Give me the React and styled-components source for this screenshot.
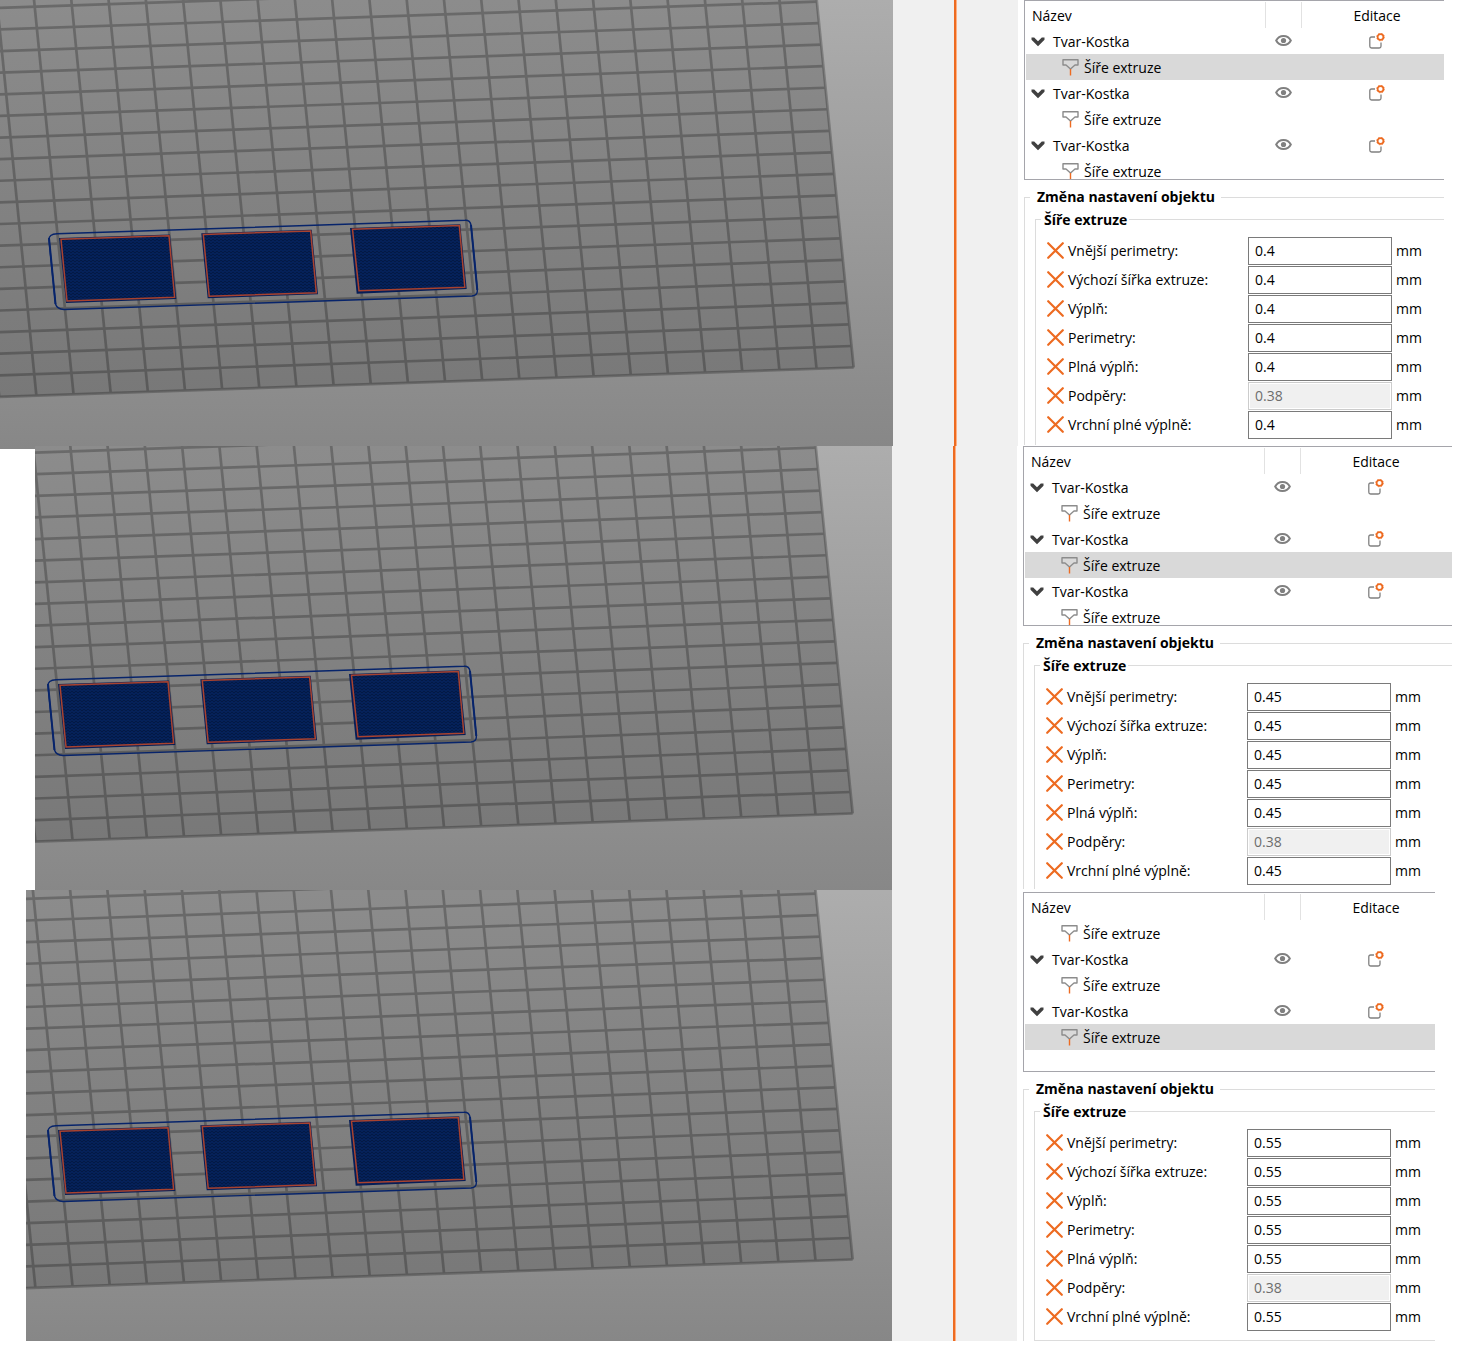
import React, { useState } from 'react'
import styled, { createGlobalStyle } from 'styled-components'

const GlobalStyle = createGlobalStyle`
  * {
    box-sizing: border-box;
  }

  body {
    margin: 0;
    background: #fff;
    color: #000;
    font-family: 'Open Sans', 'Noto Sans', sans-serif;
    font-size: 14px;
    line-height: 20px;
  }
`

const Section = styled.section`
  display: grid;
  grid-template-columns: minmax(0, 1fr) 125px ${(props) => props.$side}px;
`

const Viewport = styled.div`
  padding-left: ${(props) => props.$indent}px;
  margin-bottom: ${(props) => (props.$overlap ? '-3px' : '0')};

  svg {
    display: block;
    width: 100%;
    height: auto;
  }
`

const Splitter = styled.div`
  display: flex;
  justify-content: center;
  background: #f0f0f0;
  z-index: 1;

  &::before {
    content: '';
    width: 3px;
    background: linear-gradient(to right, #ed6b21 2px, #ffb083 2px);
  }
`

const Sidebar = styled.aside`
  min-width: 0;
  padding: ${(props) => props.$top}px ${(props) => props.$right}px 0 6px;
  background: #fff;
`

const ListBox = styled.div`
  height: 180px;
  overflow: hidden;
  border: solid #a5a5ab;
  border-width: 1px 0 1px 1px;
  padding: 1px 0 0 1px;
`

const Table = styled.table`
  width: 100%;
  min-width: 427px;
  table-layout: fixed;
  border-collapse: collapse;
`

const HeadCell = styled.th`
  width: ${(props) => props.$width || 'auto'};
  height: 26px;
  padding: 2px 0 0 ${(props) => (props.$first ? '6px' : '0')};
  font-weight: 400;
  text-align: ${(props) => (props.$first ? 'left' : 'center')};
  box-shadow: ${(props) => (props.$first ? 'none' : 'inset 1px 0 #e2e2e2')};
`

const Row = styled.tr`
  height: 26px;
  background: ${(props) => (props.$selected ? '#d9d9d9' : 'transparent')};
`

const Cell = styled.td`
  height: 26px;
  padding: 0;
`

const NameWrapper = styled.div`
  display: flex;
  align-items: center;
  gap: ${(props) => (props.$child ? '5px' : '8px')};
  padding-top: 2px;
  padding-left: ${(props) => (props.$child ? '36px' : '5px')};
`

const IconButton = styled.button`
  display: flex;
  justify-content: center;
  margin: 0 auto;
  padding: 0;
  border: none;
  background: none;
  cursor: pointer;

  ${NameWrapper} & {
    margin: 0;
  }
`

const Group = styled.fieldset`
  min-width: 0;
  margin: 6px 0 0;
  padding: 0 0 0 10px;
  border: solid #dcdcdc;
  border-width: 1px 0 0 1px;
`

const SubGroup = styled.fieldset`
  min-width: 0;
  margin: 0;
  padding: 6px 0 ${(props) => props.$tail}px 11px;
  border: solid #dcdcdc;
  border-width: 1px 0 ${(props) => (props.$closed ? '1px' : '0')} 1px;
`

const Legend = styled.legend`
  margin-left: -5px;
  padding: 0 6px 0 7px;
  font-weight: 700;
  line-height: 22px;
`

const SubLegend = styled.legend`
  margin-left: -6px;
  padding: 2px 2px 0 3px;
  font-weight: 700;
  line-height: 20px;
`

const Field = styled.div`
  display: grid;
  grid-template-columns: 17px 184px 144px auto;
  align-items: center;
  height: 29px;
`

const Label = styled.label`
  padding-left: 4px;
`

const Input = styled.input`
  width: 144px;
  height: 28px;
  margin: 0;
  padding: 0 6px;
  border: 1px solid #7a7a7a;
  border-radius: 0;
  background: #fff;
  color: #000;
  font: inherit;

  &:disabled {
    border-color: #ccc;
    background: #f0f0f0;
    box-shadow: inset 0 0 0 1px #fff;
    color: #6d6d6d;
  }
`

const Unit = styled.span`
  padding-left: 4px;
`

const ChevronIcon = () => (
  <svg width="14" height="10" viewBox="0 0 14 10">
    <path
      d="M0.5 0.6 H3.2 L7 4.2 L10.8 0.6 H13.5 V2.8 L7 9.2 L0.5 2.8 Z"
      fill="#404040"
    />
  </svg>
)

const NozzleIcon = () => (
  <svg width="17" height="18" viewBox="0 1 17 18">
    <path
      d="M1 1.7 H16 V7 H13 L8.5 11 L4 7 H1 Z"
      fill="none"
      stroke="#8c8c8c"
      strokeWidth="1.4"
      strokeLinejoin="round"
    />
    <path d="M8.5 11 V17.5" stroke="#ed6b21" strokeWidth="1.4" />
  </svg>
)

const EyeIcon = () => (
  <svg width="17" height="14" viewBox="0 0 17 14">
    <path
      d="M1.2 6.5 C4.2 0.4 12.8 0.4 15.8 6.5 C12.8 12.6 4.2 12.6 1.2 6.5 Z"
      fill="none"
      stroke="#808080"
      strokeWidth="2"
    />
    <circle cx="8.5" cy="6.5" r="2.6" fill="#808080" />
  </svg>
)

const EditIcon = () => (
  <svg width="16" height="16" viewBox="0 0 16 16">
    <path
      d="M6 4 H2.6 Q0.8 4 0.8 5.8 V13.2 Q0.8 15 2.6 15 H10.2 Q12 15 12 13.2 V9.5"
      fill="none"
      stroke="#808080"
      strokeWidth="1.3"
    />
    <circle cx="11.5" cy="4" r="2.9" fill="none" stroke="#ed6b21" strokeWidth="1.7" />
    <circle
      cx="11.5"
      cy="4"
      r="3.8"
      fill="none"
      stroke="#ed6b21"
      strokeWidth="0.8"
      strokeDasharray="1.5 1.5"
    />
  </svg>
)

const CrossIcon = () => (
  <svg width="17" height="17" viewBox="0 0 17 17">
    <path
      d="M1.2 1.2 L15.8 15.8 M15.8 1.2 L1.2 15.8"
      stroke="#ed6b21"
      strokeWidth="2.2"
      strokeLinecap="round"
    />
  </svg>
)

const objects = [
  {
    outer: '59,238 170,234.5 176.3,299 66,303',
    inner: '61,239.3 169,235.8 174.6,297.3 67,301'
  },
  {
    outer: '201.3,233.3 311.7,229.7 318,294.3 207.7,298.3',
    inner: '203.3,234.5 310.6,231 316.3,292.7 209.2,296.3'
  },
  {
    outer: '350,228 460.3,224.3 466.7,289 356.7,293.7',
    inner: '352.5,229.3 459.3,225.6 464.8,287.3 359,290.7'
  }
]

const columns = Array.from({ length: 25 }, (_, k) => ({
  x1: 816.3 - 37.27 * k,
  x2: 853.7 - 37.15 * k,
  y2: 367.5 + 1.284 * k
}))

const rows = Array.from({ length: 20 }, (_, j) => ({
  y1: 397 - 21.62 * j,
  x2: 853.7 - 2.15 * j,
  y2: 367.5 - 21.52 * j
}))

function Bed({ id, viewBox }) {
  return (
    <svg viewBox={viewBox} role="img" aria-label="Náhled tiskové podložky">
      <defs>
        <linearGradient id={`back-${id}`} gradientUnits="userSpaceOnUse" x1="0" y1="0" x2="0" y2="449">
          <stop offset="0" stopColor="#adadad" />
          <stop offset="1" stopColor="#878787" />
        </linearGradient>
        <linearGradient id={`bed-${id}`} gradientUnits="userSpaceOnUse" x1="0" y1="0" x2="0" y2="397">
          <stop offset="0" stopColor="#8c8c8c" />
          <stop offset="1" stopColor="#787878" />
        </linearGradient>
        <pattern id={`fill-${id}`} width="4" height="3" patternUnits="userSpaceOnUse">
          <rect width="4" height="3" fill="#031945" />
          <path d="M0 1 H2 M2 2 H4" stroke="#06286c" strokeWidth="1" />
        </pattern>
      </defs>
      <rect x="0" y="-4" width="900" height="460" fill={`url(#back-${id})`} />
      <polygon points="0,-4 816.3,-4 853.7,367.5 0,397" fill={`url(#bed-${id})`} />
      <g stroke="#000" strokeWidth="2.7" opacity="0.24">
        {columns.map((line, k) => (
          <line key={k} x1={line.x1} y1="-4" x2={line.x2} y2={line.y2} />
        ))}
        {rows.map((line, j) => (
          <line key={j} x1="-1" y1={line.y1} x2={line.x2} y2={line.y2} />
        ))}
      </g>
      <g fill="none" stroke="#07246b">
        <path
          d="M49 240 Q48.5 234 57 233.8 L465 220.3 Q470 220 471 225 L477.3 290 Q477.8 295.6 472 296 L64 309.5 Q57 309 55.5 304 Z"
          strokeWidth="1.4"
        />
        <path d="M49 238 L55.5 304 M471 225 L477.3 290" strokeWidth="2" />
      </g>
      {objects.map((object) => (
        <g key={object.outer}>
          <polygon points={object.outer} fill="#061d57" />
          <polygon points={object.inner} fill={`url(#fill-${id})`} stroke="#a8422f" strokeWidth="1.5" />
        </g>
      ))}
    </svg>
  )
}

function ObjectList({ items, selected, onSelect }) {
  return (
    <ListBox>
      <Table>
        <thead>
          <tr>
            <HeadCell $first $width="239px">
              Název
            </HeadCell>
            <HeadCell $width="36px" aria-label="Viditelnost" />
            <HeadCell>Editace</HeadCell>
          </tr>
        </thead>
        <tbody>
          {items.map((item, index) =>
            item === 'object' ? (
              <Row key={index}>
                <Cell>
                  <NameWrapper>
                    <IconButton aria-label="Sbalit">
                      <ChevronIcon />
                    </IconButton>
                    Tvar-Kostka
                  </NameWrapper>
                </Cell>
                <Cell>
                  <IconButton aria-label="Zobrazit">
                    <EyeIcon />
                  </IconButton>
                </Cell>
                <Cell>
                  <IconButton aria-label="Upravit">
                    <EditIcon />
                  </IconButton>
                </Cell>
              </Row>
            ) : (
              <Row
                key={index}
                $selected={index === selected}
                onClick={() => onSelect(index)}
              >
                <Cell colSpan={3}>
                  <NameWrapper $child>
                    <NozzleIcon />
                    Šíře extruze
                  </NameWrapper>
                </Cell>
              </Row>
            )
          )}
        </tbody>
      </Table>
    </ListBox>
  )
}

const labels = [
  'Vnější perimetry:',
  'Výchozí šířka extruze:',
  'Výplň:',
  'Perimetry:',
  'Plná výplň:',
  'Podpěry:',
  'Vrchní plné výplně:'
]

function Settings({ id, value, tail, closed }) {
  return (
    <Group>
      <Legend>Změna nastavení objektu</Legend>
      <SubGroup $tail={tail} $closed={closed}>
        <SubLegend>Šíře extruze</SubLegend>
        {labels.map((label, index) => {
          const disabled = label === 'Podpěry:'
          const name = `field-${id}-${index}`
          return (
            <Field key={label}>
              <IconButton type="button" aria-label="Odebrat">
                <CrossIcon />
              </IconButton>
              <Label htmlFor={name}>{label}</Label>
              <Input
                id={name}
                type="text"
                defaultValue={disabled ? '0.38' : value}
                disabled={disabled}
              />
              <Unit>mm</Unit>
            </Field>
          )
        })}
      </SubGroup>
    </Group>
  )
}

const sections = [
  {
    id: 'a',
    value: '0.4',
    items: ['object', 'width', 'object', 'width', 'object', 'width'],
    selected: 1,
    viewBox: '0 0 893 449',
    indent: 0,
    overlap: true,
    side: 440,
    right: 14,
    top: 0,
    tail: 6
  },
  {
    id: 'b',
    value: '0.45',
    items: ['object', 'width', 'object', 'width', 'object', 'width'],
    selected: 3,
    viewBox: '36 0 857 444',
    indent: 35,
    side: 441,
    right: 6,
    top: 0,
    tail: 4
  },
  {
    id: 'c',
    value: '0.55',
    items: ['width', 'object', 'width', 'object', 'width'],
    selected: 4,
    viewBox: '27 -2 866 451',
    indent: 26,
    side: 441,
    right: 23,
    top: 2,
    tail: 9,
    closed: true
  }
]

function Comparison({ section }) {
  const [selected, setSelected] = useState(section.selected)

  return (
    <Section $side={section.side}>
      <Viewport $indent={section.indent} $overlap={section.overlap}>
        <Bed id={section.id} viewBox={section.viewBox} />
      </Viewport>
      <Splitter />
      <Sidebar $top={section.top} $right={section.right}>
        <ObjectList
          items={section.items}
          selected={selected}
          onSelect={setSelected}
        />
        <Settings
          id={section.id}
          value={section.value}
          tail={section.tail}
          closed={section.closed}
        />
      </Sidebar>
    </Section>
  )
}

function App() {
  return (
    <main>
      <GlobalStyle />
      {sections.map((section) => (
        <Comparison key={section.id} section={section} />
      ))}
    </main>
  )
}

export default App
